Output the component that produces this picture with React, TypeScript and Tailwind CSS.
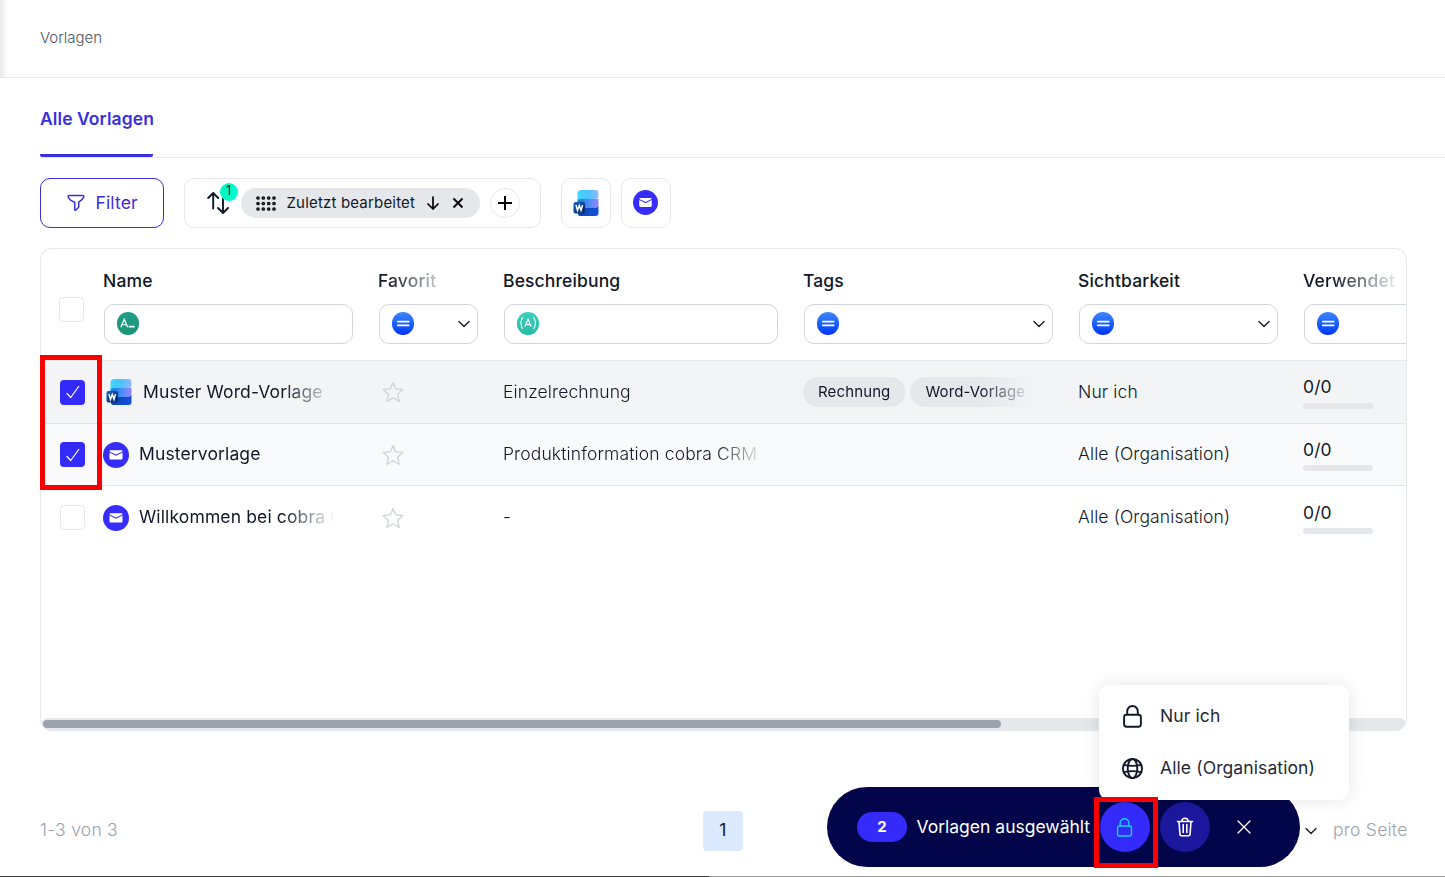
import type { ReactNode } from 'react';

function WordIcon({ className = '', id }: { className?: string; id: string }) {
  return (
    <svg viewBox="0 0 26 26" className={'h-[26px] w-[26px] shrink-0 ' + className} aria-hidden="true">
      <defs>
        <linearGradient id={id + 'a'} x1="0" y1="0" x2="1" y2="0">
          <stop offset="0" stopColor="#3fd8fb" />
          <stop offset="0.5" stopColor="#4cc3fd" />
          <stop offset="1" stopColor="#92b8fb" />
        </linearGradient>
        <linearGradient id={id + 'b'} x1="0" y1="0" x2="1" y2="0">
          <stop offset="0" stopColor="#0f75dc" />
          <stop offset="0.55" stopColor="#4b8df7" />
          <stop offset="1" stopColor="#9c82fb" />
        </linearGradient>
        <linearGradient id={id + 'c'} x1="0" y1="0" x2="1" y2="0.4">
          <stop offset="0" stopColor="#0b3fae" />
          <stop offset="1" stopColor="#1152d6" />
        </linearGradient>
        <linearGradient id={id + 'd'} x1="0" y1="0" x2="1" y2="1">
          <stop offset="0" stopColor="#1463c4" />
          <stop offset="1" stopColor="#06215f" />
        </linearGradient>
      </defs>
      <path d="M5 16h20.500v7a3 3 0 0 1-3 3H7a2 2 0 0 1-2-2z" fill={'url(#' + id + 'c)'} />
      <path d="M4.500 9h21v5.500a3.500 3.500 0 0 1-3.500 3.500H4.500z" fill={'url(#' + id + 'b)'} />
      <path d="M4.500 4a4 4 0 0 1 4-4h14a3 3 0 0 1 3 3v3a3 3 0 0 1-3 3h-14a4 4 0 0 0-4 3z" fill={'url(#' + id + 'a)'} />
      <rect x="0.500" y="12" width="11.500" height="11.500" rx="2" fill={'url(#' + id + 'd)'} />
      <path d="M3 15l1.500 5.300 1.750-4.900 1.750 4.900 1.500-5.300" fill="none" stroke="#fff" strokeWidth="1.450" />
    </svg>
  );
}

function MailIcon({ className = '' }: { className?: string }) {
  return (
    <svg viewBox="0 0 26 26" className={'shrink-0 ' + className} aria-hidden="true">
      <circle cx="13" cy="13" r="13" fill="#372dfa" />
      <path d="M7.700 8.300h10.600c.7 0 1.200.5 1.200 1.100L13 12.400 6.500 9.400c0-.6.5-1.100 1.200-1.100z" fill="#fff" />
      <path d="M6.500 10.500l6.500 3.200 6.500-3.200v5.900c0 .7-.5 1.200-1.200 1.200H7.700c-.7 0-1.200-.5-1.200-1.200z" fill="#fff" />
    </svg>
  );
}

function Lock({ className = '' }: { className?: string }) {
  return (
    <svg viewBox="0 0 24 24" className={className} fill="none" stroke="currentColor" aria-hidden="true">
      <rect x="3.250" y="10.200" width="17.500" height="12.500" rx="2.500" />
      <path d="M6.500 10.200V6.500a5.500 5.500 0 0 1 11 0v3.700" />
    </svg>
  );
}

function Globe({ className = '' }: { className?: string }) {
  return (
    <svg viewBox="0 0 24 24" className={className} fill="none" stroke="currentColor" aria-hidden="true">
      <circle cx="12" cy="12" r="10" />
      <ellipse cx="12" cy="12" rx="5" ry="10" />
      <path d="M3 8.200c5 1.200 13 1.200 18 0M3 15.800c5-1.200 13-1.200 18 0" />
    </svg>
  );
}

function Chevron({ className = '' }: { className?: string }) {
  return (
    <svg viewBox="0 0 12 12" className={'h-3 w-3 shrink-0 ' + className} fill="none" stroke="#111827" strokeWidth="1.300" strokeLinecap="round" strokeLinejoin="round" aria-hidden="true">
      <path d="M1 3.500l5 5 5-5" />
    </svg>
  );
}

function Badge({ kind }: { kind: 'eq' | 'text' | 'var' }) {
  const bg = {
    eq: 'bg-linear-to-b from-[#3f86fb] to-[#0b2cfb]',
    text: 'bg-linear-to-b from-[#1f9d85] to-[#1c9377]',
    var: 'bg-linear-to-b from-[#3fcfbd] to-[#22bba6]',
  }[kind];
  return (
    <span className={'mb-[1.5px] flex h-[22.5px] w-[22.5px] shrink-0 items-center justify-center rounded-full ' + bg}>
      <svg viewBox="0 0 23 23" className="h-full w-full" fill="none" stroke="#fff" aria-hidden="true">
        {kind === 'eq' && <path d="M5.800 9.800h11.400M5.800 13.600h11.400" strokeWidth="1.700" strokeLinecap="round" />}
        {kind === 'text' && (
          <>
            <path d="M3.900 15.500L7.400 7.500l3.500 8M5 13h4.800" strokeWidth="1.200" />
            <path d="M12 15h6" strokeWidth="1.900" />
          </>
        )}
        {kind === 'var' && (
          <>
            <path d="M8 15.200l3.300-7.700 3.300 7.700M9.200 12.900h4.200" strokeWidth="1.200" />
            <path d="M5.800 5.500c-2.100 3.500-2.100 8.500 0 12M17 5.500c2.100 3.500 2.100 8.500 0 12" strokeWidth="1.100" />
          </>
        )}
      </svg>
    </span>
  );
}

function Checkbox({ checked = false }: { checked?: boolean }) {
  return checked ? (
    <span className="flex h-[25px] w-[25px] items-center justify-center rounded-[4px] bg-[#342bfb] pl-0.5">
      <svg viewBox="0 0 14 14" className="h-3.5 w-3.5" fill="none" stroke="#fff" strokeWidth="1.200" strokeLinecap="round" strokeLinejoin="round" aria-hidden="true">
        <path d="M1 8.500L4.700 12.500 12.700 1.500" />
      </svg>
    </span>
  ) : (
    <span className="block h-[25px] w-[25px] rounded-[4px] border border-[#e5e7eb] bg-white" />
  );
}

function HeadCell({ label, labelClass = '', width, kind, select = false }: { label: string; labelClass?: string; width: string; kind: 'eq' | 'text' | 'var'; select?: boolean }) {
  return (
    <div className={'shrink-0 pt-5 pr-[13px] pl-3 ' + width}>
      <div className={'h-6 text-[17.5px] leading-6 font-medium tracking-[0.14px] text-[#111827] ' + labelClass}>{label}</div>
      <div className="mt-[11px] ml-px flex h-10 items-center justify-between rounded-[10px] border border-[#d1d5db] bg-white pr-[7px] pl-[11.5px]">
        <Badge kind={kind} />
        {select && <Chevron />}
      </div>
    </div>
  );
}

function Star() {
  return (
    <svg viewBox="0 0 24 24" className="mt-px ml-1 h-[22px] w-[22px]" fill="none" stroke="#d1d5db" strokeWidth="1.500" strokeLinejoin="round" aria-hidden="true">
      <path d="M12 1.800l3 6.800 7.700.7-5.700 5.200 1.800 7.700L12 18.300l-6.800 3.900L7 14.500 1.300 9.300 9 8.600z" />
    </svg>
  );
}

const fadeName = '[mask-image:linear-gradient(to_right,black_180px,transparent_232px)]';
const fadeDesc = '[mask-image:linear-gradient(to_right,black_212px,transparent_262px)]';
const fadeTags = '[mask-image:linear-gradient(to_right,black_178px,transparent_230px)]';

function Row({ icon, name, desc, tags, vis, checked, bg, last = false }: { icon: ReactNode; name: string; desc: string; tags?: string[]; vis: string; checked?: boolean; bg: string; last?: boolean }) {
  return (
    <div className={'flex h-[62.5px] items-center text-[17.5px] tracking-[0.13px] text-[#111827] ' + bg + (last ? '' : ' border-b border-[#e1e3e8]')}>
      <div className="w-[50px] shrink-0 pt-px pl-[18.5px]"><Checkbox checked={checked} /></div>
      <div className={'ml-3 flex w-[263px] shrink-0 items-center whitespace-nowrap ' + fadeName}>{icon}<span>{name}</span></div>
      <div className="w-[125px] shrink-0 pl-3"><Star /></div>
      <div className={'ml-3 w-[288px] shrink-0 font-light whitespace-nowrap ' + fadeDesc}>{desc}</div>
      <div className={'ml-3 flex w-[263px] shrink-0 gap-[5px] ' + fadeTags}>
        {tags?.map((t) => (
          <span key={t} className="flex h-[30px] shrink-0 items-center rounded-full bg-[#e5e7eb] px-[15px] text-[15px] whitespace-nowrap">{t}</span>
        ))}
      </div>
      <div className="w-[225px] shrink-0 px-3 font-light whitespace-nowrap">{vis}</div>
      <div className="shrink-0 pl-3">
        <div className="leading-[25px]">0/0</div>
        <div className="mt-[3.5px] mb-[0.5px] h-1.5 w-[70px] rounded-[3px] bg-[#e5e7eb]" />
      </div>
    </div>
  );
}

export default function App() {
  return (
    <div className="relative flex h-[877px] w-[1445px] flex-col overflow-hidden bg-white font-['Inter',sans-serif] text-[#111827]">
      <header className="flex h-[78px] shrink-0 items-center border-b border-[#e5e7eb] bg-linear-to-r from-[#e8e8e8] to-white to-[8px] pl-10 text-[15px] font-light text-[#4b5563]">
        Vorlagen
      </header>
      <nav className="ml-10 flex h-20 shrink-0 items-stretch border-b border-[#e5e7eb]">
        <div className="h-[79px] w-[113px] rounded-b-[2px] border-b-3 border-[#3a2fe0] pt-[29px] text-[17.5px] leading-6 font-semibold tracking-[0.08px] whitespace-nowrap text-[#3a2fe0]">Alle Vorlagen</div>
      </nav>

      <div className="mt-5 flex h-[50px] shrink-0 items-stretch pl-10">
        <button className="flex w-[124px] items-center rounded-[10px] border border-[#3a2fd8] pl-[26px] text-[17.5px] tracking-[0.14px] text-[#3a2fd8]">
          <svg viewBox="0 0 18 18" className="mr-[10.5px] h-[18px] w-[18px]" fill="none" stroke="currentColor" strokeWidth="1.500" strokeLinejoin="round" aria-hidden="true">
            <path d="M2.200 1.500h13.600c.8 0 1.200.8.9 1.500-.8 2.300-2.600 4-5 5.200v4.500c0 .4-.2.8-.5 1l-2.300 2.300c-.5.5-1.200.2-1.200-.5V8.200C4.200 7 2 5.300 1.300 3c-.3-.7.100-1.500.9-1.500z" />
          </svg>
          Filter
        </button>
        <div className="ml-5 flex w-[357px] items-center rounded-[10px] border border-[#e5e7eb]">
          <span className="relative ml-[22px] block h-6 w-6">
            <svg viewBox="0 0 24 24" className="h-6 w-6" fill="none" stroke="#111827" strokeWidth="1.900" strokeLinecap="round" strokeLinejoin="round" aria-hidden="true">
              <path d="M6.200 17.500V2.300M1.200 7l5-5 5 5M16 5.500v16M11 17l5 5 5-5" />
            </svg>
            <span className="absolute -top-[8.5px] left-[12.5px] flex h-[18px] w-[18px] items-center justify-center rounded-full bg-[#00fac8] text-[12.500px] leading-none">1</span>
          </span>
          <span className="ml-[10px] flex h-[30px] w-[239px] items-center rounded-full bg-[#e5e7eb] pl-[15px] text-[15px] whitespace-nowrap">
            <svg viewBox="0 0 20 15" className="h-[15px] w-5" fill="#888" stroke="#111" strokeWidth="1.400" aria-hidden="true">
              {[2, 7.3, 12.700, 18].map((x) => [2, 7.500, 13].map((y) => <circle key={x + '-' + y} cx={x} cy={y} r="1.150" />))}
            </svg>
            <span className="ml-[10.5px] w-[128px] tracking-[0.18px]">Zuletzt bearbeitet</span>
            <svg viewBox="0 0 14 14" className="ml-[11px] h-[14px] w-[14px]" fill="none" stroke="#000" strokeWidth="1.700" strokeLinecap="round" strokeLinejoin="round" aria-hidden="true">
              <path d="M7 1v12M2 8l5 5 5-5" />
            </svg>
            <svg viewBox="0 0 12 12" className="ml-3 h-3 w-3" fill="none" stroke="#000" strokeWidth="1.900" aria-hidden="true">
              <path d="M1.500 1.500l9 9M10.500 1.500l-9 9" />
            </svg>
          </span>
          <span className="ml-[10px] flex h-[30px] w-[30px] items-center justify-center rounded-full border border-[#e5e7eb]">
            <svg viewBox="0 0 14 14" className="h-[14px] w-[14px]" fill="none" stroke="#000" strokeWidth="2" aria-hidden="true">
              <path d="M7 0v14M0 7h14" />
            </svg>
          </span>
        </div>
        <span className="ml-5 flex w-[50px] items-center justify-center rounded-[10px] border border-[#e5e7eb]"><WordIcon id="tw" className="mr-px" /></span>
        <span className="ml-[10px] flex w-[50px] items-center justify-center rounded-[10px] border border-[#e5e7eb]"><MailIcon className="mr-px mb-px h-[25px] w-[25px]" /></span>
      </div>

      <section className="mt-5 ml-10 flex h-[483px] w-[1367px] shrink-0 flex-col overflow-hidden rounded-[12px] border border-b-0 border-[#e5e7eb]">
        <div className="flex h-28 shrink-0 border-b border-[#e5e7eb]">
          <div className="w-[50px] shrink-0 pt-12 pl-[18px]"><Checkbox /></div>
          <HeadCell label="Name" width="w-[275px]" kind="text" />
          <HeadCell label="Favorit" labelClass="[mask-image:linear-gradient(to_right,black_10px,transparent_75px)]" width="w-[125px]" kind="eq" select />
          <HeadCell label="Beschreibung" width="w-[300px]" kind="var" />
          <HeadCell label="Tags" width="w-[275px]" kind="eq" select />
          <HeadCell label="Sichtbarkeit" width="w-[225px]" kind="eq" select />
          <HeadCell label="Verwendet" labelClass="[mask-image:linear-gradient(to_right,black_30px,transparent_100px)]" width="w-[175px]" kind="eq" select />
        </div>
        <Row checked bg="bg-[#f3f4f6]" icon={<WordIcon id="rw" className="mr-[11.5px] ml-[2.5px]" />} name="Muster Word-Vorlage" desc="Einzelrechnung" tags={['Rechnung', 'Word-Vorlage']} vis="Nur ich" />
        <Row checked bg="bg-[#f9fafb]" icon={<MailIcon className="mt-0.5 mr-[10px] h-[26px] w-[26px]" />} name="Mustervorlage" desc="Produktinformation cobra CRM" vis="Alle (Organisation)" />
        <Row last bg="bg-white" icon={<MailIcon className="mt-0.5 mr-[10px] h-[26px] w-[26px]" />} name="Willkommen bei cobra CRM" desc="-" vis="Alle (Organisation)" />
        <div className="mt-auto h-[13px] shrink-0 rounded-full bg-[#e5e7eb] pt-0.5 pl-0.5">
          <div className="h-2 w-[958px] rounded-full bg-[#9ca3af]" />
        </div>
      </section>

      <footer className="mt-20 flex h-10 shrink-0 items-center pl-10 text-[17.5px] font-light tracking-[0.25px] text-[#9ca3af]">
        <span className="w-[663px] pb-0.5">1-3 von 3</span>
        <span className="flex h-10 w-10 items-center justify-center rounded-[4px] bg-[#dbeafe] pb-0.5 font-normal text-[#111827]">1</span>
        <Chevron className="ml-[561.5px]" />
        <span className="ml-[16.5px] pb-0.5 whitespace-nowrap">pro Seite</span>
      </footer>

      <div className="absolute bottom-0 left-0 flex h-px w-full"><span className="w-[709px] bg-[#3b3b3b]" /><span className="flex-1 bg-[#999]" /></div>

      <div className="absolute top-[787px] left-[827px] flex h-20 w-[473px] items-center rounded-full bg-[#03054a] pl-[30px] text-[17.5px] text-white">
        <span className="flex h-[30px] w-[50px] items-center justify-center rounded-full bg-[#342bfb] text-[15px] font-bold">2</span>
        <span className="ml-[9.5px] w-[173.5px] whitespace-nowrap">Vorlagen ausgewählt</span>
        <span className="ml-[10px] flex h-[50px] w-[50px] items-center justify-center rounded-full bg-[#342bfb] pr-px text-[#12d3ee]"><Lock className="h-[19px] w-[19px] stroke-[1.8]" /></span>
        <span className="ml-[10px] flex h-[50px] w-[50px] items-center justify-center rounded-full bg-[#1b189e]">
          <svg viewBox="0 0 18 20" className="h-5 w-[18px]" fill="none" stroke="#fff" strokeWidth="1.600" strokeLinecap="round" strokeLinejoin="round" aria-hidden="true">
            <path d="M1.500 4.500h15M3 4.500l1 13.200c.1.700.5 1 1.200 1h7.600c.7 0 1.100-.3 1.200-1l1-13.200M5.800 4.200c.2-1.800 1.100-3 3.200-3s3 1.200 3.200 3M7.200 7.500v8M10.800 7.500v8" />
          </svg>
        </span>
        <svg viewBox="0 0 14 14" className="ml-[27px] h-[14px] w-[14px]" fill="none" stroke="#fff" strokeWidth="1.300" strokeLinecap="round" aria-hidden="true">
          <path d="M1 1l12 12M13 1L1 13" />
        </svg>
      </div>

      <div className="absolute top-[685px] left-[1099px] flex h-[115px] w-[250px] flex-col rounded-[10px] bg-white pt-[5px] text-[17.5px] tracking-[0.1px] text-[#1f2937] shadow-[0_0_18px_rgba(0,0,0,0.1)]">
        <div className="flex h-[52px] items-center pl-[22px]"><Lock className="mr-4 h-[23px] w-[23px] stroke-2 text-[#111827]" />Nur ich</div>
        <div className="flex h-[52px] items-center pl-[22px]"><Globe className="mr-4 h-[23px] w-[23px] stroke-2 text-[#111827]" />Alle (Organisation)</div>
      </div>

      <div className="absolute top-[355px] left-[40px] h-[135px] w-[62px] border-5 border-[#fb0000]" />
      <div className="absolute top-[797px] left-[1094px] h-[71px] w-[64px] border-5 border-[#fb0000]" />
    </div>
  );
}
